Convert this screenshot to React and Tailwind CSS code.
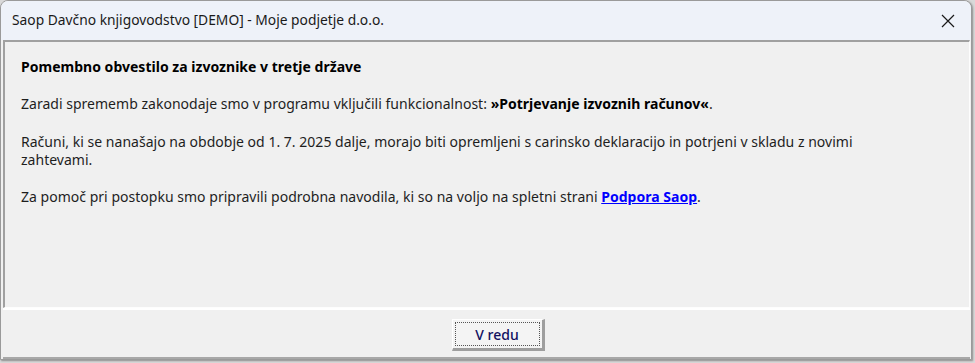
import React from "react";

export default function App() {
  return (
    <div className="w-[975px] h-[363px] bg-[#d9d9d9] overflow-hidden relative" style={{ fontFamily: '"Noto Sans", "Open Sans", sans-serif' }}>
      <div className="absolute left-0 top-0 w-[972px] h-[360px] rounded-t-[8px] border border-[#9a9a9a] bg-[#f0f0f0] flex flex-col overflow-hidden shadow-[1px_1px_2px_rgba(0,0,0,0.35)]">
        {/* title bar */}
        <div className="h-[39px] shrink-0 bg-[#eef2f9] flex items-center justify-between pl-[11px] pr-[16px]">
          <span className="text-[13.8px] text-[#1a1a1a]">Saop Davčno knjigovodstvo [DEMO] - Moje podjetje d.o.o.</span>
          <svg width="14" height="14" viewBox="0 0 14 14" className="mt-[1px]">
            <path d="M1 1 L13 13 M13 1 L1 13" stroke="#1a1a1a" strokeWidth="1.2" fill="none" />
          </svg>
        </div>
        {/* content panel */}
        <div className="flex-1 flex flex-col pl-[2px] pr-[1px]">
          <div className="h-[268px] border-t-[2px] border-l-[2px] border-[#a0a0a0] border-r border-r-[#fdfdfd] border-b border-b-[#fdfdfd] bg-[#f0f0f0] pl-[16px] pt-[16px] text-[14px] tracking-[0.02px] text-[#1e1e1e] leading-[18px]">
            <div className="font-bold text-black text-[14px]">Pomembno obvestilo za izvoznike v tretje države</div>
            <div className="mt-[19px]">
              Zaradi sprememb zakonodaje smo v programu vključili funkcionalnost: <b className="text-black text-[14px]">»Potrjevanje izvoznih računov«</b>.
            </div>
            <div className="mt-[20px] w-[870px]">
              Računi, ki se nanašajo na obdobje od 1. 7. 2025 dalje, morajo biti opremljeni s carinsko deklaracijo in potrjeni v skladu z novimi zahtevami.
            </div>
            <div className="mt-[19px]">
              Za pomoč pri postopku smo pripravili podrobna navodila, ki so na voljo na spletni strani{" "}
              <a className="font-bold text-[#0000ff] underline text-[14px]">Podpora Saop</a>.
            </div>
          </div>
          <div className="h-[2px] bg-[#ffffff]" />
          <div className="flex-1 flex items-start justify-center pt-[9px] border-b-[2px] border-[#a8a8a8]">
            <div className="w-[93px] h-[32px] ml-[23px] border-t border-l border-white border-r-[3px] border-b-[3px] border-r-[#9e9e9e] border-b-[#9e9e9e] bg-[#f4f4f4] p-[2px]">
              <div className="h-full border border-dotted border-[#555] flex items-center justify-center text-[14px] text-[#101060] font-medium">
                V redu
              </div>
            </div>
          </div>
        </div>
      </div>
    </div>
  );
}
